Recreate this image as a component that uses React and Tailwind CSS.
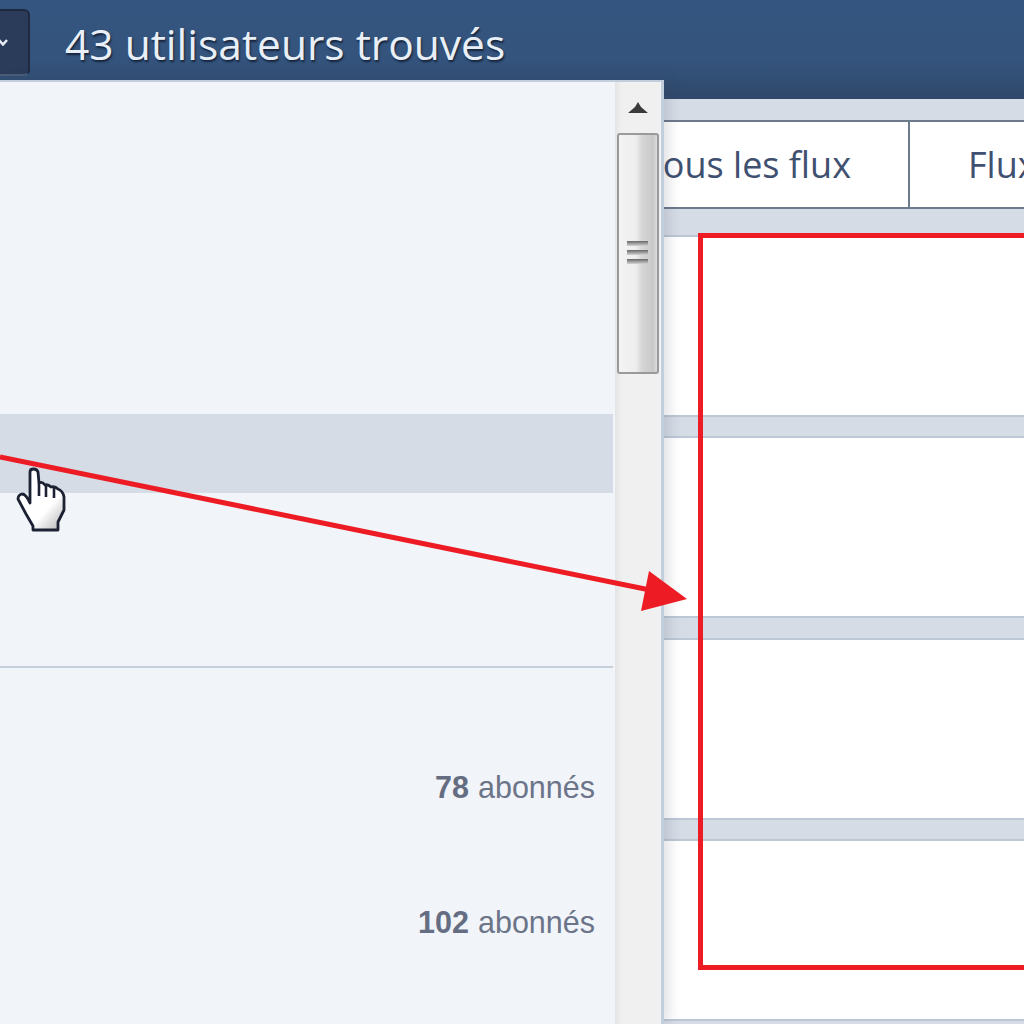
import React from 'react';

const rows = [0, 1, 2, 3, 4];

function HandCursor() {
  return (
    <svg className="absolute left-[14px] top-[464px]" width="56" height="70" viewBox="14 464 56 70" fill="none">
      <defs>
        <linearGradient id="handFill" x1="0.2" y1="0.3" x2="0.8" y2="1">
          <stop offset="0" stopColor="#ffffff" />
          <stop offset="0.6" stopColor="#ffffff" />
          <stop offset="1" stopColor="#c4c4c4" />
        </linearGradient>
      </defs>
      <path
        d="M30 472 Q30 469 33.500 469 Q37 469 38 472 L39 483 Q42 481 45 485 Q48 484 51 487 Q55 486 58 489 Q63 491 64 497 L64 510 L58 522 L58 530 L33 530 L33 526 L26 514 L18 499 Q18 495 22 494 Q26 494 30 503 Z"
        fill="url(#handFill)"
        stroke="#1c2233"
        strokeWidth="2.800"
        strokeLinejoin="round"
      />
      <path d="M39 483 L39 496 M46 486 L46 497 M54 488 L54 498" stroke="#1c2233" strokeWidth="2.600" />
    </svg>
  );
}

function Annotation() {
  return (
    <svg className="absolute left-0 top-0" width="1024" height="1024" viewBox="0 0 1024 1024" fill="none">
      <path d="M0 457 L650 590" stroke="#ed1c24" strokeWidth="5" />
      <path d="M649 571 L687 599 L641 611 Z" fill="#ed1c24" />
    </svg>
  );
}

function Scrollbar() {
  return (
    <div className="w-[45px] ml-[2px] shrink-0 flex flex-col items-center bg-[linear-gradient(90deg,#e4e4e4,#f0f0f0_15%)]">
      <svg className="mt-[20px]" width="22" height="11" viewBox="0 0 22 11">
        <path d="M11 0 L14 5 L21 11 L1 11 L8 5 Z" fill="#3a3a3a" />
      </svg>
      <div className="mt-[20px] w-[42px] h-[241px] flex items-center justify-center rounded-[3px] border-2 border-[#9a9a9a] bg-[linear-gradient(90deg,#f4f4f4,#ededed_45%,#d6d6d6_60%,#c8c8c8_90%,#dcdcdc)]">
        <div className="flex flex-col gap-[4px] mb-[2px]">
          <div className="w-[21px] h-[5px] bg-[linear-gradient(180deg,#666,#d4d4d4)]" />
          <div className="w-[21px] h-[5px] bg-[linear-gradient(180deg,#666,#d4d4d4)]" />
          <div className="w-[21px] h-[5px] bg-[linear-gradient(180deg,#666,#d4d4d4)]" />
        </div>
      </div>
    </div>
  );
}

function Subscribers({ count }) {
  return (
    <div className="h-[135px] flex items-center justify-end pr-[18px] text-[30.500px] text-[#6b7488] font-['Liberation_Sans',sans-serif]">
      <b className="mr-[9px] text-[#646d82]">{count}</b>abonnés
    </div>
  );
}

export default function App() {
  return (
    <div className="relative w-[1024px] h-[1024px] overflow-hidden bg-[#d5dce6] font-['Open_Sans',sans-serif]">
      <header className="h-[99px] flex items-start bg-[linear-gradient(180deg,#34557f,#34547d_60%,#2f486b)]">
        <div className="-ml-[30px] mt-[9px] w-[60px] h-[67px] shrink-0 flex items-center justify-end pr-[20px] rounded-[6px] border-2 border-[#1d2a40] border-b-[#4b5c77] bg-[#2a3c5a]">
          <svg width="10" height="7" viewBox="0 0 10 7" fill="none">
            <path d="M1 1 L5 5.500 L9 1" stroke="#e8edf3" strokeWidth="2.500" />
          </svg>
        </div>
        <h1 className="ml-[35px] mt-[16px] text-[42.500px] leading-[56px] whitespace-nowrap text-[#e9eff6] [text-shadow:1px_2px_2px_#16233a]">
          43 utilisateurs trouvés
        </h1>
      </header>

      <main className="pt-[21px]">
        <nav className="h-[89px] flex pl-[573px] bg-white border-y-2 border-[#6c7a8b] text-[36px] text-[#3f5070]">
          <div className="w-[337px] shrink-0 flex items-center justify-end pr-[57px] border-r-2 border-[#6c7a8b]">Tous les flux</div>
          <div className="shrink-0 flex items-center pl-[58px]">Flux</div>
        </nav>
        <div className="mt-[26px] flex flex-col gap-[19.330px]">
          {rows.map((row) => (
            <div key={row} className="h-[182px] shrink-0 bg-white border-y-2 border-[#bcc7d6]" />
          ))}
        </div>
      </main>

      <aside className="absolute left-0 top-[80px] w-[664px] h-[944px] flex bg-[#f1f4f9] border-t-2 border-r-[3px] border-[#c3cedc] shadow-[5px_0_12px_rgba(60,70,90,0.16)]">
        <div className="w-[613px] shrink-0">
          <div className="h-[332px]" />
          <div className="h-[79px] bg-[#d5dce6]" />
          <div className="h-[175px] border-b-2 border-[#c5cfdc]" />
          <div className="pt-[52px]">
            <Subscribers count="78" />
            <Subscribers count="102" />
          </div>
        </div>
        <Scrollbar />
      </aside>

      <div className="absolute left-[698px] top-[233px] w-[400px] h-[737px] border-[5px] border-[#ed1c24]" />
      <HandCursor />
      <Annotation />
    </div>
  );
}
